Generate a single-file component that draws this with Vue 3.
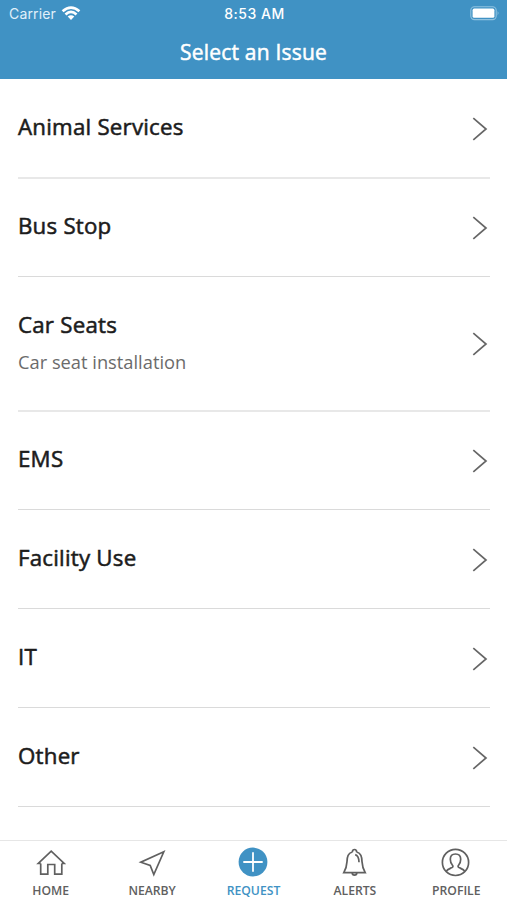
<script setup>
const issues = [
  { title: 'Animal Services', soft: true },
  { title: 'Bus Stop' },
  { title: 'Car Seats', detail: 'Car seat installation', soft: true },
  { title: 'EMS' },
  { title: 'Facility Use' },
  { title: 'IT' },
  { title: 'Other' },
]
const tabs = ['Home', 'Nearby', 'Request', 'Alerts', 'Profile']
</script>

<template>
  <div class="screen">
    <header class="header">
      <div class="status">
        <div class="carrier">
          <span class="carrier-name">Carrier</span>
          <svg class="wifi" width="20" height="15" viewBox="0 0 20 15">
            <g fill="none" stroke="#fff" stroke-width="2.7">
              <path d="M1.6 5.2Q10-2 18.4 5.2" />
              <path d="M4.5 8.4Q10 3.4 15.5 8.4" />
            </g>
            <path d="M6.7 10.6Q10 7.8 13.3 10.6L10 14Z" fill="#fff" />
          </svg>
        </div>
        <span class="time">8:53 AM</span>
        <svg class="battery" width="30" height="15" viewBox="0 0 30 15">
          <rect x="0.8" y="0.8" width="25.4" height="12.8" rx="3.6" fill="none" stroke="#8fc2e0" stroke-width="1.1" />
          <rect x="2.6" y="2.6" width="21.8" height="9.2" rx="1.6" fill="#fff" />
          <path d="M27.7 5Q29.5 7.2 27.7 9.4Z" fill="#9ccbe5" />
        </svg>
      </div>
      <h1 class="heading">Select an Issue</h1>
    </header>

    <ul class="list">
      <li v-for="issue in issues" :key="issue.title" class="row" :class="{ tall: issue.detail, soft: issue.soft }">
        <div class="copy">
          <div class="title">{{ issue.title }}</div>
          <div v-if="issue.detail" class="detail">{{ issue.detail }}</div>
        </div>
        <svg class="chevron" width="18" height="26" viewBox="0 0 18 26">
          <path d="M2.3 2.2L15 13L2.3 23.8" fill="none" stroke="#666" stroke-width="1.7" />
        </svg>
      </li>
    </ul>

    <nav class="tabs">
      <div v-for="tab in tabs" :key="tab" class="tab" :class="{ active: tab === 'Request' }">
        <svg class="icon" width="30" height="30" viewBox="0 0 30 30" fill="none" stroke="currentColor" stroke-width="1.7">
          <path v-if="tab === 'Home'" d="M4.7 16.4V27.2H11.8V17.5H18.7V27.2H25.8V16.4M4.7 16.4H2.3L15.2 4.1L28.2 16.4H25.8" />
          <path v-else-if="tab === 'Nearby'" d="M26.8 4.8L3.8 15.2L13.2 18.5L16.8 27.5Z" />
          <template v-else-if="tab === 'Request'">
            <circle cx="15" cy="15" r="14.4" fill="currentColor" stroke="none" />
            <path d="M15 5.3V24.7M5.3 15H24.7" stroke="#fff" stroke-width="1.8" />
          </template>
          <template v-else-if="tab === 'Alerts'">
            <path d="M12.3 5.2C12.3 1.6 16.7 1.6 16.7 5.2M12.3 5C8 6.3 7.2 9.2 7 14.6C6.8 19 5.8 22 3.8 25.6H25.2C23.2 22 22.2 19 22 14.6C21.8 9.2 21 6.3 16.7 5" />
            <path d="M12.2 25.8C12.2 28.9 16.8 28.9 16.8 25.8M15.2 7.6C18.2 8.4 18.9 11 19 15.2" />
          </template>
          <template v-else>
            <circle cx="14.5" cy="15.4" r="13.1" />
            <path d="M5.2 24.4C6.5 22.2 9 21.7 11 20.6C12.2 19.9 12.2 19.1 11.3 18C9.8 16.1 9.3 14.3 9.3 12.2C9.3 9 11.4 7 14.5 7S19.7 9 19.7 12.2C19.7 14.3 19.2 16.1 17.7 18C16.8 19.1 16.8 19.9 18 20.6C20 21.7 22.5 22.2 23.8 24.4" />
          </template>
        </svg>
        <span class="label">{{ tab }}</span>
      </div>
    </nav>
  </div>
</template>

<style>
body {
  margin: 0;
  background: #fff;
}
</style>

<style scoped>
.screen {
  display: flex;
  flex-direction: column;
  width: 507px;
  height: 900px;
  overflow: hidden;
  background: #fff;
  font-family: "Open Sans", sans-serif;
}
.header {
  box-sizing: border-box;
  flex: none;
  height: 79px;
  background: #4092c4;
  color: #fff;
}
.status {
  display: grid;
  grid-template-columns: 1fr auto 1fr;
  align-items: center;
  height: 27px;
  padding: 0 7px 0 9px;
  font: 14px/27px Inter, sans-serif;
}
.carrier {
  display: flex;
  align-items: center;
  gap: 5px;
}
.carrier-name {
  color: #e0f0fa;
  letter-spacing: 0.15px;
}
.time {
  font-weight: 500;
  font-size: 14px;
  letter-spacing: 0.5px;
}
.battery {
  justify-self: end;
}
.heading {
  margin: 10px 0 0;
  text-align: center;
  font-size: 21px;
  line-height: 30px;
  font-weight: 400;
  letter-spacing: 0.2px;
  -webkit-text-stroke: 0.5px currentColor;
}
.list {
  flex: 1;
  margin: 0;
  padding: 0 17px 0 18px;
  list-style: none;
}
.row {
  box-sizing: border-box;
  display: flex;
  align-items: center;
  justify-content: space-between;
  height: 99px;
  border-bottom: 1px solid #dadada;
}
.row.soft {
  height: 100px;
  margin-bottom: -1px;
  border-bottom: 2px solid #e8e8e8;
}
.row.tall {
  height: 135px;
}
.title {
  padding-bottom: 3px;
  color: #1c1c1c;
  font-size: 22.3px;
  line-height: 32px;
  font-weight: 400;
  letter-spacing: 0.22px;
  -webkit-text-stroke: 0.55px currentColor;
}
.detail {
  margin-top: 4px;
  padding-bottom: 2px;
  color: #6b6b6b;
  font-size: 18.3px;
  line-height: 28px;
}
.chevron {
  margin: 1px 1px 0 0;
}
.tabs {
  box-sizing: border-box;
  flex: none;
  display: grid;
  grid-template-columns: repeat(5, 1fr);
  height: 60px;
  border-top: 1px solid #e6e6e6;
}
.tab {
  display: flex;
  flex-direction: column;
  align-items: center;
  padding-top: 6px;
  color: #606060;
}
.active {
  color: #4092c4;
}
.label {
  margin-top: 6px;
  font-size: 12.2px;
  line-height: 16px;
  font-weight: 600;
  text-transform: uppercase;
}
</style>
